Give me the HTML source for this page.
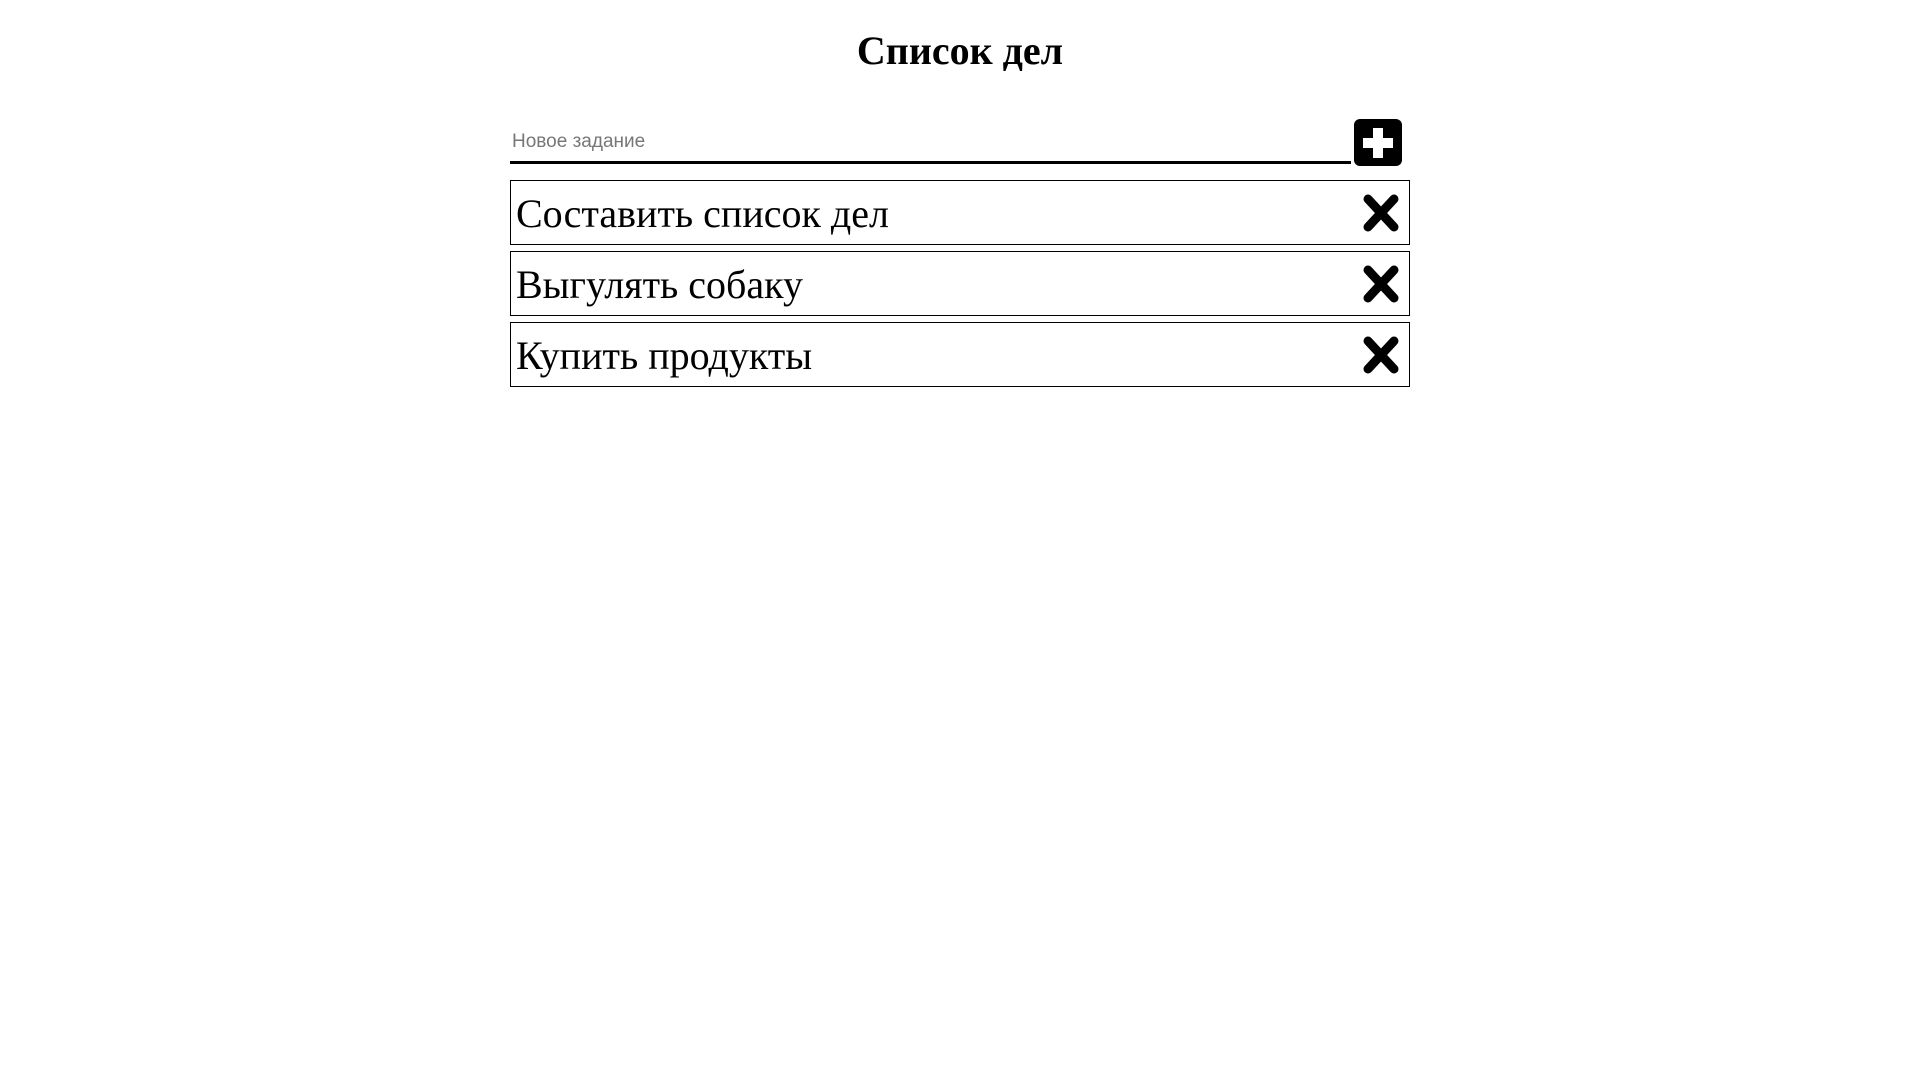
<!DOCTYPE html>
<html><head><meta charset="utf-8"><style>
body{margin:0;background:#fff;width:1920px;height:1079px;position:relative;font-family:"Liberation Serif",serif;}
h1{position:absolute;top:27px;left:0;width:1920px;text-align:center;margin:0;font-size:40px;font-weight:bold;}
.inp{position:absolute;left:510px;top:127px;height:37px;border-bottom:3px solid #000;font-family:"Liberation Sans",sans-serif;font-size:19px;color:#777;line-height:30px;padding-left:2px;box-sizing:border-box;width:841px;}
.add{position:absolute;left:1354px;top:119px;width:48px;height:47px;background:#000;border-radius:6px;}
.item{position:absolute;left:510px;width:900px;height:65px;border:1px solid #000;box-sizing:border-box;font-size:40px;line-height:66px;padding-left:5px;}
.item svg{position:absolute;right:8px;top:12px;}
</style></head><body>
<h1>Список дел</h1>
<div class="inp">Новое задание</div>
<div class="add"><svg width="48" height="47" viewBox="0 0 48 47"><path d="M19 9h10v10h10v10H29v10H19V29H9V19h10z" fill="#fff"/></svg></div>
<div class="item" style="top:180px">Составить список дел<svg width="40" height="40" viewBox="0 0 40 40"><path d="M7 6L33 34M33 6L7 34" stroke="#000" stroke-width="9" stroke-linecap="round"/></svg></div>
<div class="item" style="top:251px">Выгулять собаку<svg width="40" height="40" viewBox="0 0 40 40"><path d="M7 6L33 34M33 6L7 34" stroke="#000" stroke-width="9" stroke-linecap="round"/></svg></div>
<div class="item" style="top:322px">Купить продукты<svg width="40" height="40" viewBox="0 0 40 40"><path d="M7 6L33 34M33 6L7 34" stroke="#000" stroke-width="9" stroke-linecap="round"/></svg></div>
</body></html>
